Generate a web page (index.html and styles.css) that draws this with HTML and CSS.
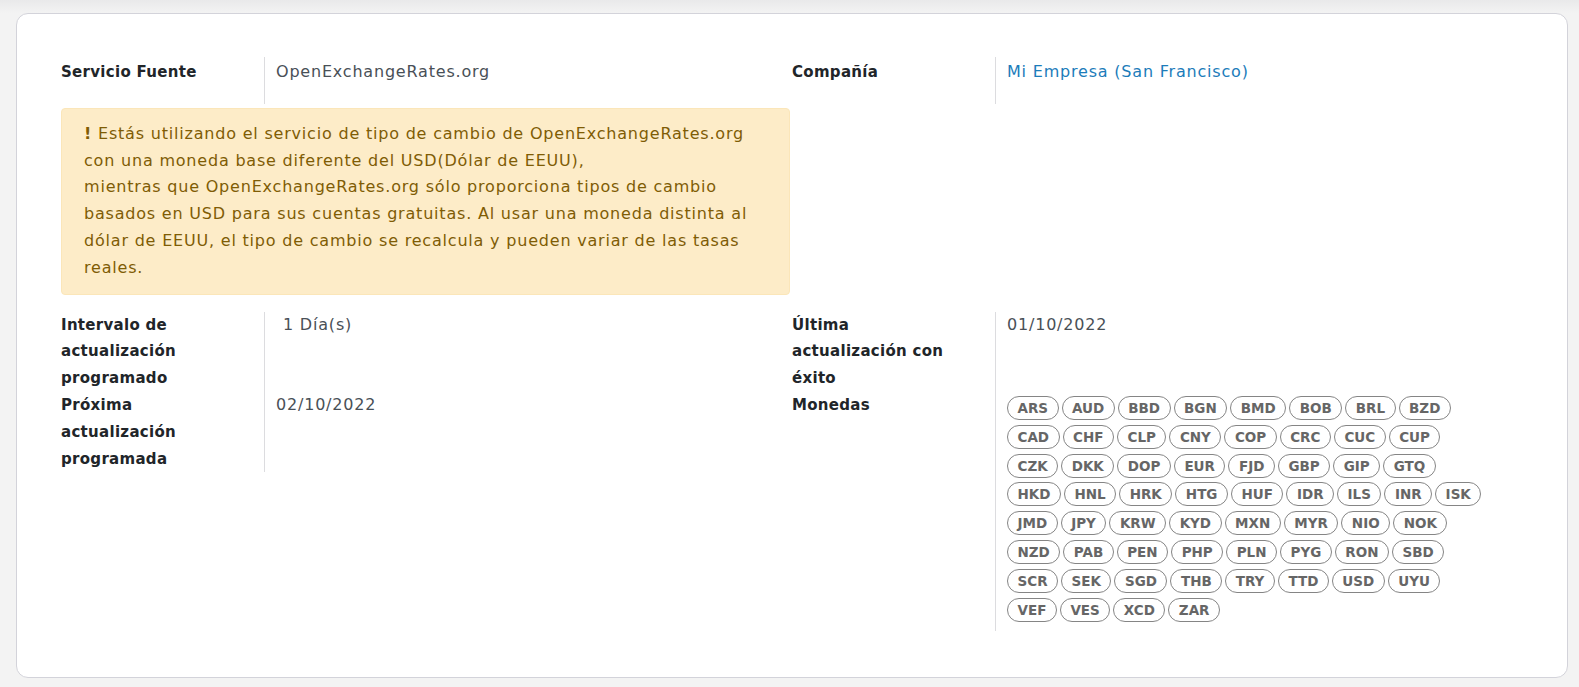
FILE: index.html
```html
<!DOCTYPE html>
<html lang="es">
<head>
<meta charset="utf-8">
<title>Tipos de cambio</title>
<link rel="stylesheet" href="styles.css">
</head>
<body>
<div class="card">
  <div class="section">
    <div class="col">
      <div class="pairs">
        <div class="label">Servicio Fuente</div>
        <div class="value">OpenExchangeRates.org</div>
      </div>
      <div class="alert"><b>!</b> Estás utilizando el servicio de tipo de cambio de OpenExchangeRates.org<br>con una moneda base diferente del USD(Dólar de EEUU),<br>mientras que OpenExchangeRates.org sólo proporciona tipos de cambio<br>basados en USD para sus cuentas gratuitas. Al usar una moneda distinta al<br>dólar de EEUU, el tipo de cambio se recalcula y pueden variar de las tasas<br>reales.</div>
    </div>
    <div class="col">
      <div class="pairs">
        <div class="label">Compañía</div>
        <div class="value"><a class="link" href="#">Mi Empresa (San Francisco)</a></div>
      </div>
    </div>
  </div>
  <div class="section lower">
    <div class="col">
      <div class="pairs group">
        <div class="label">Intervalo de actualización programado</div>
        <div class="value"><span class="num">1</span> Día(s)</div>
        <div class="label">Próxima actualización programada</div>
        <div class="value">02/10/2022</div>
      </div>
    </div>
    <div class="col">
      <div class="pairs group">
        <div class="label">Última actualización con éxito</div>
        <div class="value">01/10/2022</div>
        <div class="label">Monedas</div>
        <div class="value">
          <div class="tags">
            <span class="tag">ARS</span><span class="tag">AUD</span><span class="tag">BBD</span><span class="tag">BGN</span><span class="tag">BMD</span><span class="tag">BOB</span><span class="tag">BRL</span><span class="tag">BZD</span>
            <span class="tag">CAD</span><span class="tag">CHF</span><span class="tag">CLP</span><span class="tag">CNY</span><span class="tag">COP</span><span class="tag">CRC</span><span class="tag">CUC</span><span class="tag">CUP</span>
            <span class="tag">CZK</span><span class="tag">DKK</span><span class="tag">DOP</span><span class="tag">EUR</span><span class="tag">FJD</span><span class="tag">GBP</span><span class="tag">GIP</span><span class="tag">GTQ</span>
            <span class="tag">HKD</span><span class="tag">HNL</span><span class="tag">HRK</span><span class="tag">HTG</span><span class="tag">HUF</span><span class="tag">IDR</span><span class="tag">ILS</span><span class="tag">INR</span><span class="tag">ISK</span>
            <span class="tag">JMD</span><span class="tag">JPY</span><span class="tag">KRW</span><span class="tag">KYD</span><span class="tag">MXN</span><span class="tag">MYR</span><span class="tag">NIO</span><span class="tag">NOK</span>
            <span class="tag">NZD</span><span class="tag">PAB</span><span class="tag">PEN</span><span class="tag">PHP</span><span class="tag">PLN</span><span class="tag">PYG</span><span class="tag">RON</span><span class="tag">SBD</span>
            <span class="tag">SCR</span><span class="tag">SEK</span><span class="tag">SGD</span><span class="tag">THB</span><span class="tag">TRY</span><span class="tag">TTD</span><span class="tag">USD</span><span class="tag">UYU</span>
            <span class="tag">VEF</span><span class="tag">VES</span><span class="tag">XCD</span><span class="tag">ZAR</span>
          </div>
        </div>
      </div>
    </div>
  </div>
</div>
</body>
</html>
```

FILE: styles.css
```css
* { box-sizing: border-box; }

html, body {
  margin: 0;
  height: 100%;
}

body {
  background: linear-gradient(#e9e9ea 0, #f3f3f3 13px, #f3f3f3 100%);
  padding: 13px 11px 0 16px;
  font-family: "DejaVu Sans", "Noto Sans", sans-serif;
  font-size: 16px;
  letter-spacing: 0.8px;
  line-height: 26.8px;
  color: #495057;
}

.card {
  background: #fff;
  border: 1px solid #d3d3da;
  border-radius: 12px;
  padding: 43px 44px 46px 44px;
}

.section {
  display: grid;
  grid-template-columns: 1fr 1fr;
}

.section.lower {
  margin-top: 17px;
}

.pairs {
  display: grid;
  grid-template-columns: 203px 1fr;
}

.pairs > .label,
.pairs > .value {
  padding-top: 2px;
  padding-bottom: 18px;
}

.group > .label,
.group > .value {
  padding-top: 0;
  padding-bottom: 0;
}

.label {
  font-size: 15px;
  font-weight: 700;
  letter-spacing: 0.3px;
  color: #212529;
  padding-right: 36px;
}

.value {
  border-left: 1px solid #dcdcdf;
  padding-left: 11px;
}

.num {
  padding-left: 7px;
}

.link {
  color: #1c7cba;
  text-decoration: none;
}

.alert {
  margin: 4px 2px 0 0;
  background: #fdecc8;
  border: 1px solid #fbe6b9;
  border-radius: 4px;
  padding: 12px 22px;
  color: #7f5c05;
  white-space: nowrap;
}

.alert b {
  font-weight: 700;
}

.tags {
  display: flex;
  flex-wrap: wrap;
  column-gap: 3px;
  row-gap: 4.8px;
  max-width: 479px;
  padding: 4px 0 9px;
}

.tag {
  height: 24px;
  border: 1px solid #858585;
  border-radius: 12px;
  padding: 0 9.5px;
  font-size: 13.5px;
  letter-spacing: 0;
  line-height: 22px;
  font-weight: 700;
  color: #666;
}
```
